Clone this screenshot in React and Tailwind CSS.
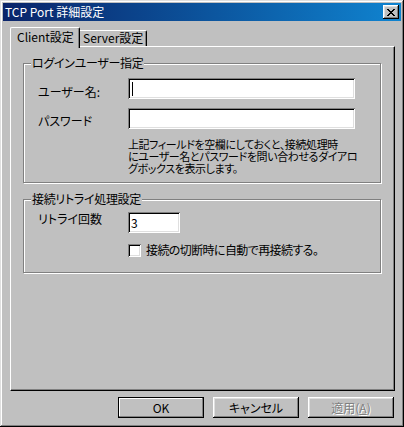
import React from "react";

const raised =
  "shadow-[inset_-1px_-1px_#000,inset_1px_1px_#fff,inset_-2px_-2px_#808080,inset_2px_2px_#dfdfdf]";
const sunken =
  "shadow-[inset_1px_1px_#808080,inset_-1px_-1px_#fff,inset_2px_2px_#000,inset_-2px_-2px_#dfdfdf]";
const etched = "border border-[#808080] shadow-[inset_1px_1px_#fff,1px_1px_#fff]";

const GroupBox = ({ title, className, children }) => (
  <div className={`relative ml-[12px] w-[358px] ${etched} ${className}`}>
    <span className="absolute left-[7px] top-[-8px] px-[1px] bg-[#c0c0c0] leading-[14px] whitespace-nowrap tracking-[-0.3px]">
      {title}
    </span>
    {children}
  </div>
);

const Button = ({ children, isDefault, disabled }) => (
  <button
    className={`w-[86px] h-[21px] flex items-center justify-center bg-[#c0c0c0] leading-[14px] ${
      isDefault
        ? "border border-black shadow-[inset_-1px_-1px_#808080,inset_1px_1px_#fff]"
        : raised
    } ${disabled ? "text-[#808080] [text-shadow:1px_1px_0_#fff]" : "text-black"}`}
  >
    {children}
  </button>
);

export default function App() {
  return (
    <div
      className={`w-[404px] h-[427px] bg-[#c0c0c0] p-[3px] flex flex-col text-[12px] text-black font-['Noto_Sans_CJK_JP',sans-serif] [font-feature-settings:'palt'] shadow-[inset_-1px_-1px_#000,inset_1px_1px_#dfdfdf,inset_-2px_-2px_#808080,inset_2px_2px_#fff]`}
    >
      {/* Title bar */}
      <div className="h-[18px] flex items-center bg-linear-to-r from-[#0a246a] to-[#1084d0] pl-[2px] pr-[2px]">
        <span className="text-white leading-[14px] whitespace-nowrap">TCP Port 詳細設定</span>
        <button className={`ml-auto w-[16px] h-[14px] bg-[#c0c0c0] flex items-center justify-center ${raised}`}>
          <svg width="8" height="7" viewBox="0 0 8 7" shapeRendering="crispEdges">
            <path
              d="M0 0h2v1h-2zM6 0h2v1h-2zM1 1h2v1h-2zM5 1h2v1h-2zM2 2h4v1h-4zM3 3h2v1h-2zM2 4h4v1h-4zM1 5h2v1h-2zM5 5h2v1h-2zM0 6h2v1h-2zM6 6h2v1h-2z"
              fill="#000"
            />
          </svg>
        </button>
      </div>

      {/* Tabs */}
      <div className="h-[19px] mt-[6px] ml-[7px] flex items-end relative z-10">
        <div className="w-[70px] h-[21px] mb-[-2px] bg-[#c0c0c0] border-t border-l border-white border-r border-r-black shadow-[inset_-1px_0_#808080] rounded-t-[2px] pl-[6px] pt-[2px] leading-[14px] whitespace-nowrap">
          Client設定
        </div>
        <div className="w-[67px] h-[16px] border-t border-white border-r border-r-black shadow-[inset_-1px_0_#808080] rounded-tr-[2px] pl-[3px] leading-[14px] whitespace-nowrap">
          Server設定
        </div>
      </div>

      {/* Panel */}
      <div className="ml-[7px] w-[385px] h-[345px] border-t border-l border-white border-r border-b border-r-black border-b-black shadow-[inset_-1px_-1px_#808080]">
        <GroupBox title="ログインユーザー指定" className="mt-[16px] h-[120px]">
          <div className="pt-[14px] pl-[14px] grid grid-cols-[90px_227px] gap-y-[9px]">
            <span className="mt-[7px] leading-[14px]">ユーザー名:</span>
            <div className={`h-[21px] bg-white flex items-center pl-[4px] ${sunken}`}>
              <span className="w-[1px] h-[14px] bg-black" />
            </div>
            <span className="mt-[6px] leading-[14px]">パスワード</span>
            <div className={`h-[21px] bg-white ${sunken}`} />
          </div>
          <p className="ml-[104px] mt-[9px] text-[11px] leading-[12px] tracking-[-0.4px] whitespace-nowrap">
            上記フィールドを空欄にしておくと、接続処理時
            <br />
            にユーザー名とパスワードを問い合わせるダイアロ
            <br />
            グボックスを表示します。
          </p>
        </GroupBox>

        <GroupBox title="接続リトライ処理設定" className="mt-[16px] h-[74px]">
          <div className="pt-[12px] pl-[14px] grid grid-cols-[90px_52px]">
            <span className="leading-[14px]">リトライ回数</span>
            <div className={`h-[21px] bg-white flex items-center pl-[3px] leading-[14px] ${sunken}`}>3</div>
          </div>
          <label className="ml-[104px] mt-[10px] flex items-center gap-[5px] leading-[14px] whitespace-nowrap tracking-[-0.6px]">
            <span className={`w-[13px] h-[13px] bg-white ${sunken}`} />
            接続の切断時に自動で再接続する。
          </label>
        </GroupBox>
      </div>

      {/* Buttons */}
      <div className="mt-[6px] ml-[115px] flex gap-[9px]">
        <Button isDefault>OK</Button>
        <Button>キャンセル</Button>
        <Button disabled>
          適用(<span className="underline">A</span>)
        </Button>
      </div>
    </div>
  );
}
